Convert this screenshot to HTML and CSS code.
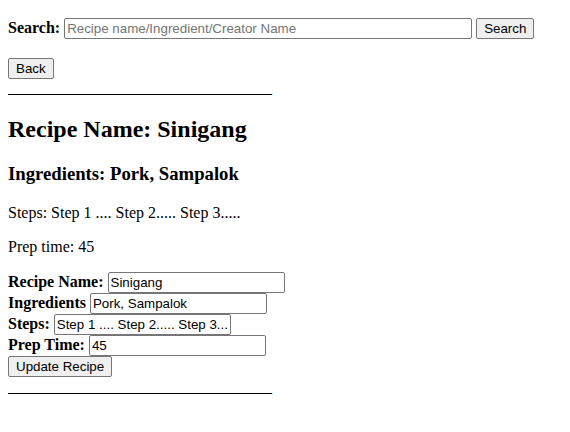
FILE: index.html
```html
<!DOCTYPE html>
<html>
<head>
<meta charset="utf-8">
<link rel="stylesheet" href="styles.css">
</head>
<body>
<div class="top">
<form class="search-form"><b>Search:</b> <input class="field search-field" type="text" placeholder="Recipe name/Ingredient/Creator Name"> <button class="btn" type="button">Search</button></form>
<br><br>
<div class="back-row"><button class="btn" type="button">Back</button><br>
<span class="rule">_________________________________</span></div>
</div>
<h2 class="title">Recipe Name: Sinigang</h2>
<h3 class="sub">Ingredients: Pork, Sampalok</h3>
<p class="para">Steps: Step 1 .... Step 2..... Step 3.....</p>
<p class="para">Prep time: 45</p>
<form class="edit-form">
<b>Recipe Name:</b> <input class="field small-field" type="text" value="Sinigang"><br>
<b>Ingredients</b> <input class="field small-field" type="text" value="Pork, Sampalok"><br>
<b>Steps:</b> <input class="field small-field" type="text" value="Step 1 .... Step 2..... Step 3....."><br>
<b>Prep Time:</b> <input class="field small-field" type="text" value="45"><br>
<button class="btn" type="button">Update Recipe</button>
</form>
<div class="bottom"><span class="rule">_________________________________</span></div>
</body>
</html>
```

FILE: styles.css
```css
html, body {
  background: #ffffff;
}
body {
  margin: 8px;
  font-family: "Liberation Serif", "Times New Roman", serif;
  font-size: 16px;
  color: #000000;
}
.top {
  padding-top: 10px;
}
.back-row {
  padding-top: 1px;
}
.search-form {
  margin: 0;
  display: inline;
}
.field {
  font-family: "Liberation Sans", Arial, sans-serif;
  font-size: 13.33px;
  border: 1px solid #767676;
  border-radius: 2px;
  padding: 1px 2px;
  height: 21px;
  box-sizing: border-box;
  color: #000;
  background: #fff;
  margin: 0;
}
.field::placeholder {
  color: #757575;
}
.search-field {
  width: 408px;
}
.small-field {
  width: 177px;
}
.btn {
  font-family: "Liberation Sans", Arial, sans-serif;
  font-size: 13.33px;
  border: 1px solid #767676;
  border-radius: 2px;
  background: #efefef;
  padding: 1px 7px;
  height: 21px;
  box-sizing: border-box;
  color: #000;
  margin: 0;
}
.title {
  font-size: 24px;
  margin: 19px 0 19.9px;
}
.sub {
  font-size: 18.72px;
  margin: 18.7px 0;
}
.para {
  margin: 16px 0;
}
.edit-form {
  margin: 0;
}
.bottom {
  padding-top: 1px;
}
```
